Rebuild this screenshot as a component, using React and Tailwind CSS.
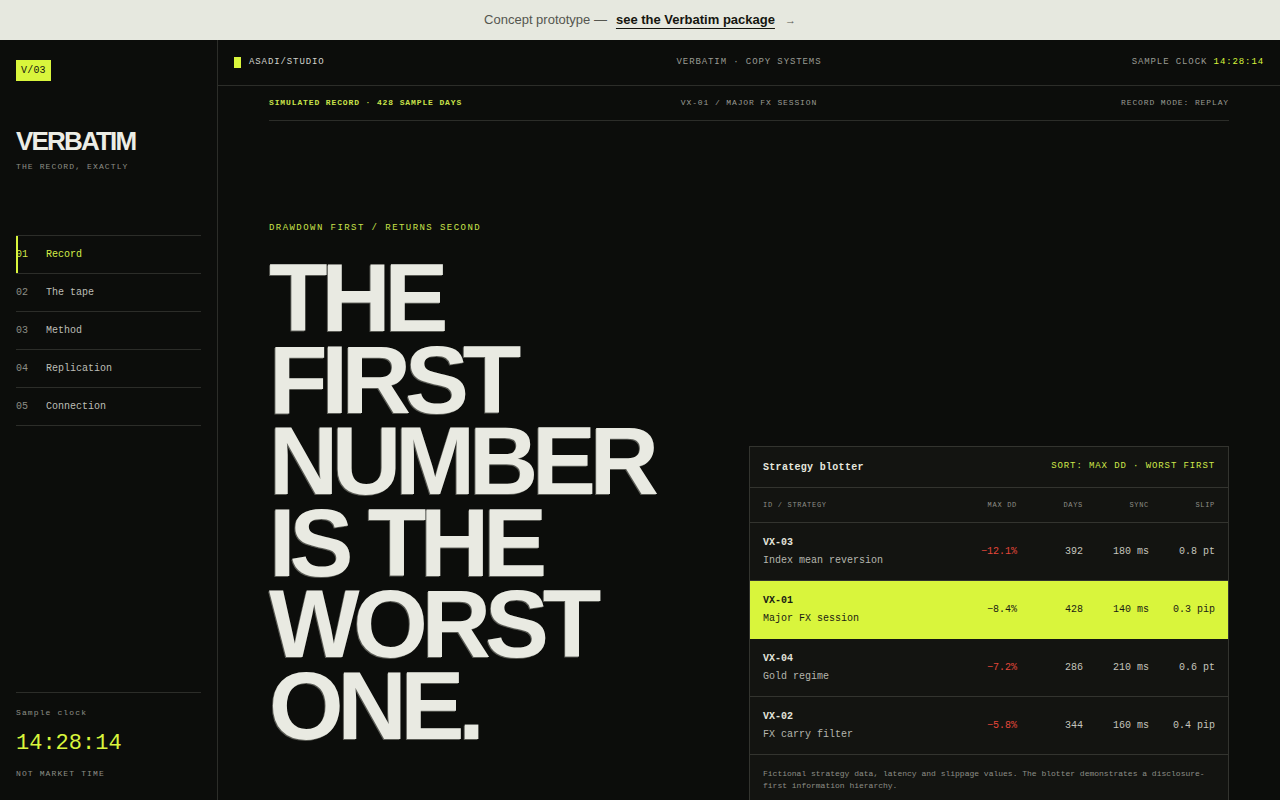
import React from 'react';

const mono = "font-['Liberation_Mono','DejaVu_Sans_Mono',monospace]";
const sans = "font-['Liberation_Sans',Arial,sans-serif]";

const NAV = [
  ['01', 'Record'],
  ['02', 'The tape'],
  ['03', 'Method'],
  ['04', 'Replication'],
  ['05', 'Connection'],
];

const ROWS = [
  { id: 'VX-03', name: 'Index mean reversion', dd: '−12.1%', days: '392', sync: '180 ms', slip: '0.8 pt' },
  { id: 'VX-01', name: 'Major FX session', dd: '−8.4%', days: '428', sync: '140 ms', slip: '0.3 pip', live: true },
  { id: 'VX-04', name: 'Gold regime', dd: '−7.2%', days: '286', sync: '210 ms', slip: '0.6 pt' },
  { id: 'VX-02', name: 'FX carry filter', dd: '−5.8%', days: '344', sync: '160 ms', slip: '0.4 pip' },
];

const Sidebar = () => (
  <aside className={`w-[218px] shrink-0 border-r border-[#2c2d29] flex flex-col px-4 pt-5 pb-[20px] ${mono}`}>
    <div className="self-start bg-[#d9f53c] text-[#14150f] text-[10px] leading-[21px] px-[5px] tracking-[0.02em]">V/03</div>

    <h1 className={`mt-[47px] text-[26px] leading-none font-bold tracking-[-0.07em] text-[#ecede5] ${sans}`}>VERBATIM</h1>
    <div className="mt-[7px] text-[8px] leading-[12px] tracking-[0.14em] text-[#8d8e86]">THE RECORD, EXACTLY</div>

    <nav className="mt-[62px] border-t border-[#2c2d29]">
      {NAV.map(([n, label], i) => {
        const on = i === 0;
        return (
          <div key={n} className="relative h-[38px] border-b border-[#2c2d29] flex items-center text-[10px]">
            {on && <span className="absolute left-0 top-0 bottom-0 w-[2px] bg-[#d9f53c]" />}
            <span className={`w-[30px] ${on ? 'text-[#cfe84a]' : 'text-[#8d8e86]'}`}>{n}</span>
            <span className={on ? 'text-[#d4ee48]' : 'text-[#bdbeb6]'}>{label}</span>
          </div>
        );
      })}
    </nav>

    <div className="mt-auto border-t border-[#2c2d29] pt-[14px]">
      <div className="text-[8px] leading-[12px] tracking-[0.14em] text-[#8d8e86]">Sample clock</div>
      <div className="mt-[12px] text-[22px] leading-[26px] text-[#d9f53c]">14:28:14</div>
      <div className="mt-[11px] text-[8px] leading-[12px] tracking-[0.14em] text-[#8d8e86]">NOT MARKET TIME</div>
    </div>
  </aside>
);

const Blotter = () => (
  <div className={`border border-[#33342f] bg-[#131411] ${mono}`}>
    <div className="h-[41px] px-[13px] flex items-center justify-between border-b border-[#33342f]">
      <span className="text-[10px] font-bold tracking-[0.03em] text-[#e6e7df]">Strategy blotter</span>
      <span className="text-[9px] tracking-[0.1em] text-[#cfe84a]">SORT: MAX DD · WORST FIRST</span>
    </div>
    <div className="h-[35px] px-[13px] grid grid-cols-[1fr_80px_66px_66px_66px] items-center border-b border-[#33342f] text-[7px] tracking-[0.1em] text-[#8d8e86]">
      <span>ID / STRATEGY</span>
      <span className="text-right">MAX DD</span>
      <span className="text-right">DAYS</span>
      <span className="text-right">SYNC</span>
      <span className="text-right">SLIP</span>
    </div>
    {ROWS.map((r) => (
      <div
        key={r.id}
        className={`h-[58px] px-[13px] grid grid-cols-[1fr_80px_66px_66px_66px] items-center border-b text-[10px] ${
          r.live ? 'bg-[#d9f53c] border-[#d9f53c] text-[#1a1b14]' : 'border-[#33342f] text-[#c4c5bd]'
        }`}
      >
        <div className="flex flex-col leading-[18px]">
          <span className={`font-bold ${r.live ? 'text-[#1a1b14]' : 'text-[#e2e3db]'}`}>{r.id}</span>
          <span className={r.live ? 'text-[#1a1b14]' : 'text-[#b5b6ae]'}>{r.name}</span>
        </div>
        <span className={`text-right ${r.live ? '' : 'text-[#e4473a]'}`}>{r.dd}</span>
        <span className="text-right">{r.days}</span>
        <span className="text-right">{r.sync}</span>
        <span className="text-right">{r.slip}</span>
      </div>
    ))}
    <p className="px-[13px] pt-[13px] pb-[14px] text-[8px] leading-[12px] text-[#8d8e86]">
      Fictional strategy data, latency and slippage values. The blotter demonstrates a disclosure-first information hierarchy.
    </p>
  </div>
);

export default function App() {
  return (
    <div className="h-[800px] flex flex-col overflow-hidden bg-[#0c0d0b]">
      <div className={`h-10 shrink-0 bg-[#e6e8df] flex items-center justify-center text-[13px] ${sans}`}>
        <span className="text-[#55564f]">Concept prototype —</span>
        <a className="ml-[9px] font-bold text-[#15160f] underline underline-offset-[4px] decoration-1">see the Verbatim package</a>
        <span className="ml-[10px] text-[11px] text-[#55564f]">→</span>
      </div>

      <div className="flex-1 flex min-h-0">
        <Sidebar />

        <main className={`flex-1 min-w-0 flex flex-col ${mono}`}>
          <header className="h-[46px] shrink-0 border-b border-[#2c2d29] px-4 grid grid-cols-3 items-center text-[9px] tracking-[0.1em]">
            <div className="flex items-center gap-2 text-[#d2d3cb]">
              <span className="w-[7px] h-[11px] bg-[#d9f53c]" />
              ASADI/STUDIO
            </div>
            <div className="text-center text-[#9a9b93]">VERBATIM · COPY SYSTEMS</div>
            <div className="text-right text-[#9a9b93]">
              SAMPLE CLOCK <span className="text-[#d9f53c]">14:28:14</span>
            </div>
          </header>

          <div className="px-[51px]">
            <div className="h-[35px] border-b border-[#2c2d29] grid grid-cols-3 items-center text-[8px] tracking-[0.11em]">
              <span className="font-bold text-[#c9e24a]">SIMULATED RECORD · 428 SAMPLE DAYS</span>
              <span className="text-center text-[#9a9b93]">VX-01 / MAJOR FX SESSION</span>
              <span className="text-right text-[#9a9b93]">RECORD MODE: REPLAY</span>
            </div>

            <div className="grid grid-cols-2 pt-[101px]">
              <div>
                <div className="text-[9px] leading-[12px] tracking-[0.16em] text-[#c9e24a]">DRAWDOWN FIRST / RETURNS SECOND</div>
                <h2
                  className={`mt-[23px] text-[96px] leading-[0.85] font-bold tracking-[-0.065em] text-[#e9eae2] [text-shadow:-1px_1px_0_#5a5b55] ${sans}`}
                >
                  THE<br />FIRST<br />NUMBER<br />IS THE<br />WORST<br />ONE.
                </h2>
              </div>
              <div className="mt-[224px]">
                <Blotter />
              </div>
            </div>
          </div>
        </main>
      </div>
    </div>
  );
}
